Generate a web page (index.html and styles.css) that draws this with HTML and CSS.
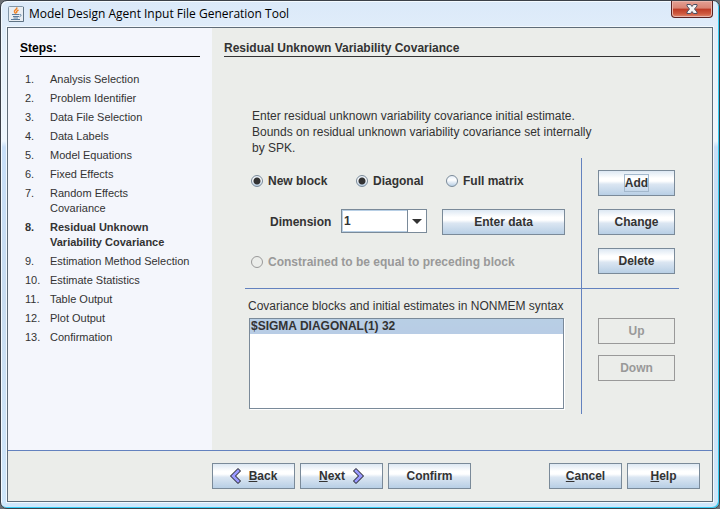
FILE: index.html
```html
<!DOCTYPE html>
<html lang="en">
<head>
<meta charset="utf-8">
<title>Model Design Agent Input File Generation Tool</title>
<link rel="stylesheet" href="styles.css">
</head>
<body>
<div class="window">
  <header class="titlebar">
    <svg class="app-icon" viewBox="0 0 16 16" width="16" height="16" aria-hidden="true">
      <rect x="0.5" y="0.5" width="15" height="15" rx="1" fill="#e9eef3" stroke="#8296a8"/>
      <path d="M1 15.5h14.5V1" fill="none" stroke="#5f7384"/>
      <path d="M8.500 1.500c1.500 1.500-3 2.500-2 4.500.4.700 1 1 1 1.800M10.500 4c-2 1-2.500 2-1.500 3" fill="none" stroke="#f08224" stroke-width="1.500"/>
      <path d="M4 8.500h7M5 10.500h6M5.500 12h4.500M11.500 8.500c2-.500 2 1.500 0 2.500M3 13.500h9" fill="none" stroke="#5a7c9c" stroke-width="1"/>
    </svg>
    <h1 class="title">Model Design Agent Input File Generation Tool</h1>
    <button class="close" type="button" aria-label="Close">
      <svg viewBox="0 0 12 10" width="12" height="10" aria-hidden="true">
        <path d="M1 .5h3.500L6 2.500 7.500.500H11v1.500L8.500 5 11 8v1.500H7.500L6 7.500 4.500 9.500H1V8l2.500-3L1 2z" fill="#f4f4f4" stroke="#4d4f62"/>
      </svg>
    </button>
  </header>

  <div class="frame">
    <div class="content">
      <nav class="sidebar" aria-label="Steps">
        <h2 class="heading steps-heading">Steps:</h2>
        <ol class="steps">
          <li><span>1.</span><span>Analysis Selection</span></li>
          <li><span>2.</span><span>Problem Identifier</span></li>
          <li><span>3.</span><span>Data File Selection</span></li>
          <li><span>4.</span><span>Data Labels</span></li>
          <li><span>5.</span><span>Model Equations</span></li>
          <li><span>6.</span><span>Fixed Effects</span></li>
          <li><span>7.</span><span>Random Effects<br>Covariance</span></li>
          <li class="current" aria-current="step"><span>8.</span><span>Residual Unknown<br>Variability Covariance</span></li>
          <li><span>9.</span><span>Estimation Method Selection</span></li>
          <li><span>10.</span><span>Estimate Statistics</span></li>
          <li><span>11.</span><span>Table Output</span></li>
          <li><span>12.</span><span>Plot Output</span></li>
          <li><span>13.</span><span>Confirmation</span></li>
        </ol>
      </nav>

      <main class="main">
        <h2 class="heading">Residual Unknown Variability Covariance</h2>
        <p class="intro">Enter residual unknown variability covariance initial estimate.<br>Bounds on residual unknown variability covariance set internally<br>by SPK.</p>

        <div class="panel">
          <form class="cell settings">
            <div class="radios">
              <label class="radio"><input type="radio" name="kind" checked>New block</label>
              <label class="radio"><input type="radio" name="structure" checked>Diagonal</label>
              <label class="radio"><input type="radio" name="structure">Full matrix</label>
            </div>
            <div class="dimension">
              <label for="dimension">Dimension</label>
              <div class="combo">
                <select id="dimension"><option>1</option><option>2</option><option>3</option></select>
                <span class="arrow"><svg viewBox="0 0 10 5" width="10" height="5" aria-hidden="true"><path d="M0 0h10L5 5z" fill="#333"/></svg></span>
              </div>
              <button class="button wide" type="button">Enter data</button>
            </div>
            <label class="radio disabled"><input type="radio" name="kind" disabled>Constrained to be equal to preceding block</label>
          </form>

          <div class="cell actions">
            <button class="button" type="button"><span class="focus">Add</span></button>
            <button class="button" type="button">Change</button>
            <button class="button" type="button">Delete</button>
          </div>

          <div class="cell blocks">
            <label for="blocks">Covariance blocks and initial estimates in NONMEM syntax</label>
            <select id="blocks" class="list" size="5"><option selected>$SIGMA DIAGONAL(1) 32</option></select>
          </div>

          <div class="cell order">
            <button class="button" type="button" disabled>Up</button>
            <button class="button" type="button" disabled>Down</button>
          </div>
        </div>
      </main>
    </div>

    <footer class="footer">
      <button class="button nav" type="button">
        <svg viewBox="0 0 12 16" width="12" height="16" aria-hidden="true"><path d="M8 .5L.5 8 8 15.500l2.500-2.500-5-5 5-5z" fill="#9999ff" stroke="#111"/></svg>
        <span><u>B</u>ack</span>
      </button>
      <button class="button nav" type="button">
        <span><u>N</u>ext</span>
        <svg viewBox="0 0 12 16" width="12" height="16" aria-hidden="true"><path d="M4 .5L11.500 8 4 15.500 1.500 13l5-5-5-5z" fill="#9999ff" stroke="#111"/></svg>
      </button>
      <button class="button nav" type="button">Confirm</button>
      <button class="button end first-end" type="button"><span><u>C</u>ancel</span></button>
      <button class="button end" type="button"><span><u>H</u>elp</span></button>
    </footer>
  </div>
</div>
</body>
</html>
```
FILE: styles.css
```css
* {
  box-sizing: border-box;
}

body {
  margin: 0;
  background: #6c6f74;
  color: #333;
  font: 12px/16px "Liberation Sans", Arial, sans-serif;
}

h1,
h2,
p,
ol {
  margin: 0;
  padding: 0;
}

button,
select,
input {
  font: inherit;
  color: inherit;
  margin: 0;
}

.window {
  display: flex;
  flex-direction: column;
  min-height: 100vh;
  padding: 0 6px 6px;
  border: 1px solid #3b4048;
  border-radius: 7px;
  background: linear-gradient(#dbe9f9 0, #e6f1fb 60px, #eef6fd 140px, #c8dff8 146px, #c8dcf0 300px, #cfe7fb 100%);
  box-shadow: inset -1px -1px 0 #35cdf5, inset 1px 1px 0 #f4faff;
}

.titlebar {
  display: flex;
  align-items: center;
  height: 26px;
  padding-left: 1px;
}

.app-icon {
  flex: none;
}

.title {
  flex: 1;
  padding-left: 5px;
  color: #000;
  font: 12px/16px "Open Sans", "Noto Sans", sans-serif;
}

.close {
  display: flex;
  align-items: center;
  justify-content: center;
  align-self: flex-start;
  width: 42px;
  height: 17px;
  padding: 0;
  border: 1px solid #5a2222;
  border-top: 0;
  border-radius: 0 0 4px 4px;
  background: linear-gradient(#e4a094 0, #d98373 45%, #bd3a25 50%, #cf5a40 80%, #e08a70 100%);
  box-shadow: inset 0 0 0 1px #e9b4aa;
}

.frame {
  display: flex;
  flex: 1;
  flex-direction: column;
  border: 1px solid #5f6c78;
  background: #ebedea;
  box-shadow: 0 0 0 1px #f2f8fd;
}

.content {
  display: flex;
  flex: 1;
}

.sidebar {
  flex: none;
  width: 204px;
  padding: 13px 12px 0;
  background: #f4f6fc;
}

.heading {
  border-bottom: 1px solid #333;
  font-size: 12px;
  line-height: 15px;
}

.steps-heading {
  border-color: #000;
  color: #000;
}

.steps {
  display: grid;
  gap: 4px;
  padding: 15px 0 0 5px;
  font-size: 11px;
  line-height: 15px;
  list-style: none;
}

.steps li {
  display: grid;
  grid-template-columns: 25px 1fr;
  white-space: nowrap;
}

.current {
  font-weight: bold;
}

.main {
  flex: 1;
  min-width: 0;
  padding: 13px 12px 35px;
}

.intro {
  padding: 51px 0 2px 28px;
}

.panel {
  display: grid;
  grid-template-columns: minmax(0, 1fr) 97px;
  margin: 0 21px;
}

.settings,
.blocks {
  border-right: 1px solid #6382bf;
}

.settings,
.actions {
  border-bottom: 1px solid #6382bf;
}

.settings {
  padding: 15px 16px 18px 6px;
  font-weight: bold;
}

.radios {
  display: grid;
  grid-template-columns: 105px 90px 1fr;
}

.radio {
  display: flex;
  align-items: center;
  gap: 5px;
}

.radio input {
  appearance: none;
  width: 12px;
  height: 12px;
  border: 1px solid #7a8a99;
  border-radius: 50%;
  background: linear-gradient(#e6eff8, #fff 40%, #b8cfe5);
}

.radio input:checked {
  background: radial-gradient(circle, #333 3px, transparent 4px), linear-gradient(#e6eff8, #fff 40%, #b8cfe5);
}

.disabled,
.button:disabled {
  color: #999;
}

.radio input:disabled {
  border-color: #999;
  background: none;
}

.dimension {
  display: flex;
  align-items: flex-start;
  padding: 20px 0 19px 19px;
}

.dimension label {
  flex: 1;
  line-height: 26px;
}

.combo {
  position: relative;
  width: 86px;
  margin-right: 15px;
}

.combo select {
  display: block;
  appearance: none;
  width: 100%;
  height: 24px;
  padding: 0 20px 0 2px;
  border: 1px solid #7a8a99;
  border-radius: 0;
  background: #fff;
  box-shadow: inset 0 0 0 1px #b8cfe5;
}

.arrow {
  position: absolute;
  top: 1px;
  right: 1px;
  bottom: 1px;
  display: flex;
  align-items: center;
  justify-content: center;
  width: 19px;
  border-left: 1px solid #7a8a99;
  background: #fff;
  pointer-events: none;
}

.button {
  display: flex;
  align-items: center;
  justify-content: center;
  gap: 7px;
  height: 26px;
  padding: 0;
  border: 1px solid #7a8a99;
  border-radius: 0;
  background: linear-gradient(#dde8f3 0, #fff 30%, #fff 42%, #dbe6f2 55%, #b8cfe5 100%);
  font-weight: bold;
}

.button:disabled {
  border-color: #999;
  background: none;
}

.wide {
  width: 123px;
}

.focus {
  border: 1px solid #a3b8cc;
}

.actions,
.order {
  display: flex;
  flex-direction: column;
  gap: 13px;
  padding: 12px 4px 12px 16px;
}

.order {
  gap: 11px;
  padding-top: 29px;
}

.blocks {
  padding: 9px 17px 5px 3px;
  white-space: nowrap;
}

.blocks label {
  display: block;
}

.list {
  display: block;
  width: calc(100% - 1px);
  height: 91px;
  margin: 4px 0 0 1px;
  padding: 0;
  overflow: hidden;
  border: 1px solid #7a8a99;
  border-radius: 0;
  background: #fff;
  box-shadow: 1px 1px 0 #fff;
}

.list option {
  min-height: 15px;
  padding: 0 1px;
  font-weight: bold;
  line-height: 15px;
}

.list option:checked {
  background: linear-gradient(#b8cfe5, #b8cce5);
  color: #333;
}

.footer {
  display: flex;
  gap: 5px;
  padding: 12px 12px 12px 204px;
  border-top: 1px solid #6382bf;
}

.nav {
  width: 83px;
}

.end {
  width: 73px;
}

.first-end {
  margin-left: auto;
}
```
